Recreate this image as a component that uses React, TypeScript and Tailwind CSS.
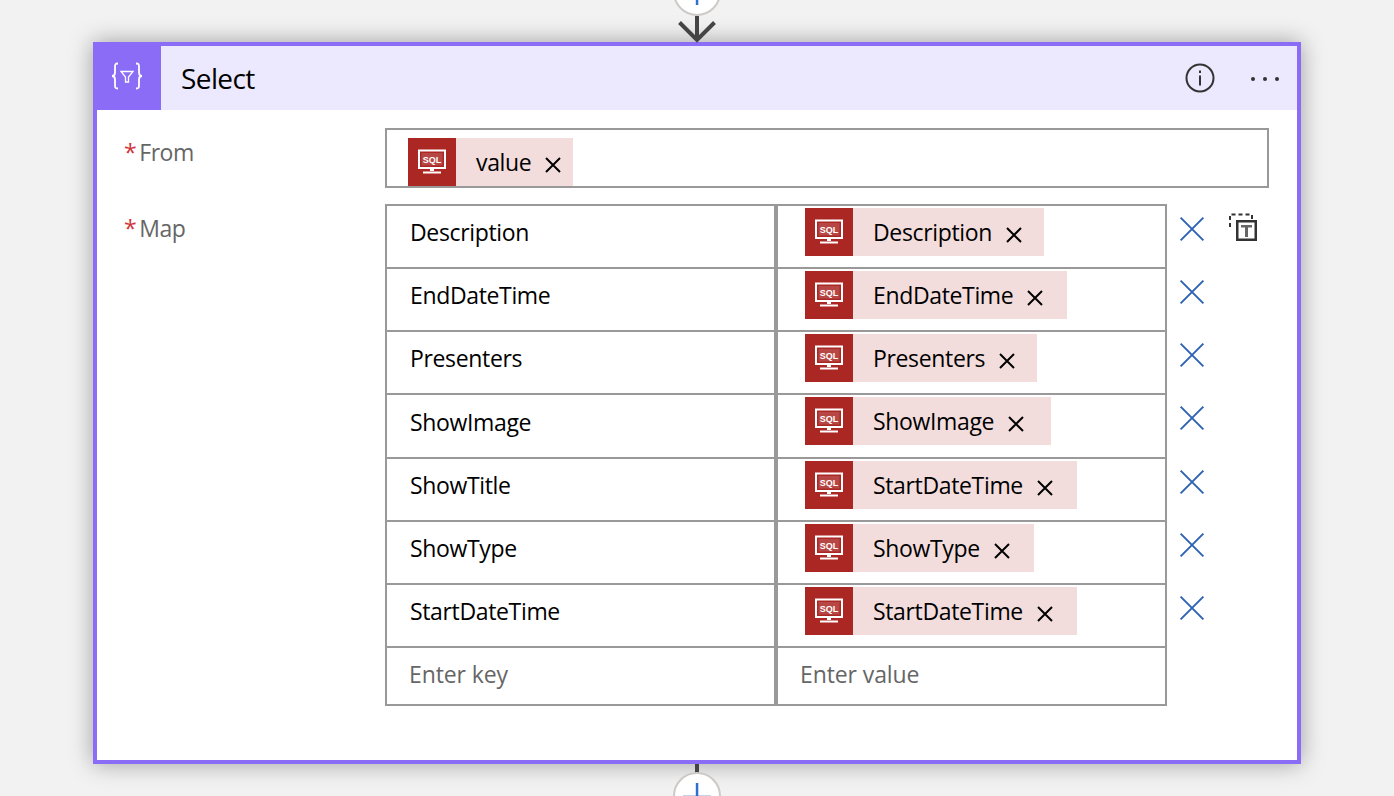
const rows = [
  { key: "Description", value: "Description", rowH: "h-[63px]", chipW: "w-[239px]" },
  { key: "EndDateTime", value: "EndDateTime", rowH: "h-[63px]", chipW: "w-[262px]" },
  { key: "Presenters", value: "Presenters", rowH: "h-[63px]", chipW: "w-[232px]" },
  { key: "ShowImage", value: "ShowImage", rowH: "h-[64px]", chipW: "w-[246px]" },
  { key: "ShowTitle", value: "StartDateTime", rowH: "h-[63px]", chipW: "w-[272px]" },
  { key: "ShowType", value: "ShowType", rowH: "h-[63px]", chipW: "w-[229px]" },
  { key: "StartDateTime", value: "StartDateTime", rowH: "h-[63px]", chipW: "w-[272px]" },
];

function SqlIcon() {
  return (
    <svg width="28" height="26" viewBox="0 0 28 26" fill="none">
      <path d="M1 1.500h26v17.500H1z" stroke="#fff" strokeWidth="2" />
      <rect x="3.500" y="4" width="21" height="12.500" fill="#fff" fillOpacity="0.15" />
      <text x="14" y="13.600" textAnchor="middle" fontSize="9" fontWeight="700" fill="#fff" fontFamily="'Liberation Sans', sans-serif">SQL</text>
      <path d="M12 19h4v3h-4z" fill="#fff" />
      <path d="M5 22.500h18v2H5z" fill="#fff" />
    </svg>
  );
}

function CloseIcon({ size = 16, color = "#000", stroke = 2 }: { size?: number; color?: string; stroke?: number }) {
  return (
    <svg width={size} height={size} viewBox="0 0 16 16" fill="none" stroke={color} strokeWidth={stroke} className="shrink-0">
      <path d="M1 1l14 14M15 1L1 15" />
    </svg>
  );
}

function Chip({ label, width }: { label: string; width: string }) {
  return (
    <div className={`flex h-12 items-center bg-[#f3dddc] ${width}`}>
      <div className="flex h-12 w-12 shrink-0 items-center justify-center bg-[#ab2724]">
        <SqlIcon />
      </div>
      <span className="ml-5 text-[23px] leading-none tracking-[-0.35px] text-black">{label}</span>
      <span className="ml-3.5 mt-[5px]">
        <CloseIcon />
      </span>
    </div>
  );
}

function PlusCircle({ className }: { className: string }) {
  return (
    <div className={`absolute left-1/2 z-10 flex h-12 w-12 -translate-x-1/2 items-center justify-center rounded-full border-2 border-[#cdc9c6] bg-white ${className}`}>
      <svg width="28" height="26" viewBox="0 0 28 26">
        <path d="M0 12h28v2H0z" fill="#c5d3ea" />
        <path d="M12.800 0h2.500v26h-2.500z" fill="#2f6fd0" />
      </svg>
    </div>
  );
}

export default function App() {
  return (
    <div className="relative flex h-[796px] justify-center overflow-hidden bg-[#f2f2f2] pt-[42px] font-['Open_Sans','Noto_Sans',sans-serif]">
      {/* connectors */}
      <PlusCircle className="top-[-32px]" />
      <svg className="absolute left-[677px] top-[16px] z-10" width="40" height="28" viewBox="0 0 40 28" fill="none" stroke="#444" strokeWidth="4">
        <path d="M20 0v24" />
        <path d="M2.500 6.500L20 24L37.500 6.500" />
      </svg>
      <div className="absolute left-[695px] top-[764px] h-[9px] w-1 bg-[#444]" />
      <PlusCircle className="top-[772px]" />

      {/* card */}
      <div className="h-[722px] w-[1208px] border-4 border-[#8a6cf6] bg-white shadow-[0_0_22px_rgba(0,0,0,0.35)]">
        <div className="flex h-16 items-center bg-[#ece8fe]">
          <div className="-ml-1 -mt-1 flex h-[68px] w-[68px] shrink-0 items-center justify-center bg-[#8a6cf6]">
            <svg width="32" height="28" viewBox="0 0 32 28" fill="none" stroke="#fff" strokeWidth="1.800">
              <path d="M7 1.500c-3 0-3 1-3 4v5c0 2-1 3.500-3 3.500c2 0 3 1.500 3 3.500v5c0 3 0 4 3 4" />
              <path d="M25 1.500c3 0 3 1 3 4v5c0 2 1 3.500 3 3.500c-2 0-3 1.500-3 3.500v5c0 3 0 4-3 4" />
              <path d="M10 9.500h12l-4.500 5.500v5h-3v-5z" strokeWidth="1.300" />
            </svg>
          </div>
          <span className="ml-5 text-[28px] tracking-[-0.6px] text-black">Select</span>
          <div className="ml-auto mr-[18px] flex items-center gap-9">
            <svg width="30" height="30" viewBox="0 0 30 30" fill="none" stroke="#333" strokeWidth="2">
              <circle cx="15" cy="15" r="13.500" />
              <path d="M15 12.500v10" />
              <path d="M15 7.500v2.500" />
            </svg>
            <div className="mt-[2px] flex gap-2">
              <div className="h-1 w-1 rounded-full bg-[#333]" />
              <div className="h-1 w-1 rounded-full bg-[#333]" />
              <div className="h-1 w-1 rounded-full bg-[#333]" />
            </div>
          </div>
        </div>

        <div className="flex pt-[18px]">
          <div className="w-[288px] shrink-0 pl-[27px]">
            <div className="flex h-[76px] items-start pt-2 text-[23px] leading-[32px] tracking-[-0.45px] text-[#666]">
              <span className="mr-[3px] text-[#d13438]">*</span>From
            </div>
            <div className="flex items-start pt-2 text-[23px] leading-[32px] tracking-[-0.45px] text-[#666]">
              <span className="mr-[3px] text-[#d13438]">*</span>Map
            </div>
          </div>

          <div className="min-w-0 flex-1">
            <div className="flex h-[60px] w-[884px] items-end border-2 border-[#999] pl-[21px]">
              <div className="flex h-12 w-[165px] items-center bg-[#f3dddc]">
                <div className="flex h-12 w-12 shrink-0 items-center justify-center bg-[#ab2724]">
                  <SqlIcon />
                </div>
                <span className="ml-5 text-[23px] leading-none tracking-[-0.35px] text-black">value</span>
                <span className="ml-3.5 mt-[5px]">
                  <CloseIcon />
                </span>
              </div>
            </div>

            <div className="mt-4 flex">
              <div className="w-[782px] shrink-0 border-2 border-[#999]">
                {rows.map((row) => (
                  <div key={row.key} className={`flex border-b-2 border-[#999] ${row.rowH}`}>
                    <div className="flex w-[391px] shrink-0 items-center border-r-4 border-[#999] pb-2 pl-[23px] text-[23px] tracking-[-0.35px] text-black">
                      {row.key}
                    </div>
                    <div className="pl-[27px] pt-[2px]">
                      <Chip label={row.value} width={row.chipW} />
                    </div>
                  </div>
                ))}
                <div className="flex h-[56px]">
                  <div className="flex w-[391px] shrink-0 items-center border-r-4 border-[#999] pb-1 pl-[22px] text-[23px] tracking-[-0.1px] text-[#666]">
                    Enter key
                  </div>
                  <div className="flex items-center pb-1 pl-[22px] text-[23px] tracking-[-0.1px] text-[#666]">Enter value</div>
                </div>
              </div>

              <div className="ml-3 flex flex-col">
                {rows.map((row, i) => (
                  <div key={row.key} className={`flex items-start pt-[12px] ${row.rowH}`}>
                    <CloseIcon size={26} color="#2d62b5" stroke={1.2} />
                    {i === 0 && (
                      <svg className="-mt-[3px] ml-6" width="28" height="28" viewBox="0 0 28 28" fill="none">
                        <path d="M1 14V1.500h22V7" stroke="#333" strokeWidth="2" strokeDasharray="4 3" />
                        <rect x="8.250" y="8.250" width="18.500" height="18.500" fill="#fff" stroke="#333" strokeWidth="2.500" />
                        <path d="M12 12h11v2.500h-4V24h-3v-9.500h-4z" fill="#666" />
                      </svg>
                    )}
                  </div>
                ))}
              </div>
            </div>
          </div>
        </div>
      </div>
    </div>
  );
}
